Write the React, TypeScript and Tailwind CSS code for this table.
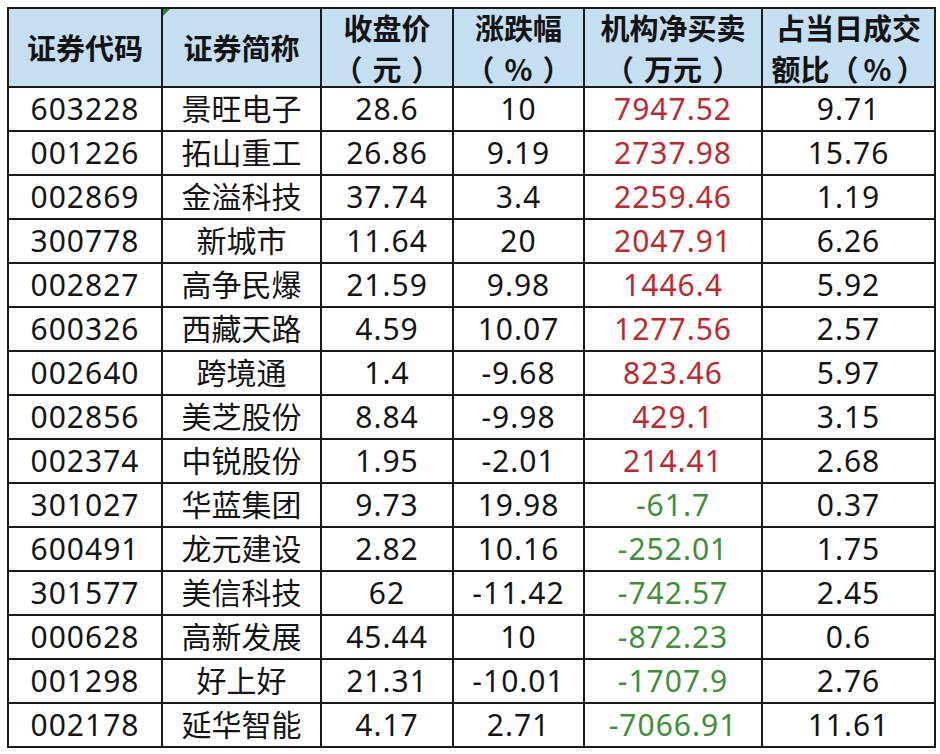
import React from 'react';

interface StockRow {
  code: string;
  name: string;
  close: string;
  change: string;
  net: string;
  ratio: string;
}

const rows: StockRow[] = [
  { code: '603228', name: '景旺电子', close: '28.6', change: '10', net: '7947.52', ratio: '9.71' },
  { code: '001226', name: '拓山重工', close: '26.86', change: '9.19', net: '2737.98', ratio: '15.76' },
  { code: '002869', name: '金溢科技', close: '37.74', change: '3.4', net: '2259.46', ratio: '1.19' },
  { code: '300778', name: '新城市', close: '11.64', change: '20', net: '2047.91', ratio: '6.26' },
  { code: '002827', name: '高争民爆', close: '21.59', change: '9.98', net: '1446.4', ratio: '5.92' },
  { code: '600326', name: '西藏天路', close: '4.59', change: '10.07', net: '1277.56', ratio: '2.57' },
  { code: '002640', name: '跨境通', close: '1.4', change: '-9.68', net: '823.46', ratio: '5.97' },
  { code: '002856', name: '美芝股份', close: '8.84', change: '-9.98', net: '429.1', ratio: '3.15' },
  { code: '002374', name: '中锐股份', close: '1.95', change: '-2.01', net: '214.41', ratio: '2.68' },
  { code: '301027', name: '华蓝集团', close: '9.73', change: '19.98', net: '-61.7', ratio: '0.37' },
  { code: '600491', name: '龙元建设', close: '2.82', change: '10.16', net: '-252.01', ratio: '1.75' },
  { code: '301577', name: '美信科技', close: '62', change: '-11.42', net: '-742.57', ratio: '2.45' },
  { code: '000628', name: '高新发展', close: '45.44', change: '10', net: '-872.23', ratio: '0.6' },
  { code: '001298', name: '好上好', close: '21.31', change: '-10.01', net: '-1707.9', ratio: '2.76' },
  { code: '002178', name: '延华智能', close: '4.17', change: '2.71', net: '-7066.91', ratio: '11.61' },
];

// title, optional second line: prefix + （unit）
const headers: { title: string; prefix?: string; unit?: string }[] = [
  { title: '证券代码' },
  { title: '证券简称' },
  { title: '收盘价', unit: '元' },
  { title: '涨跌幅', unit: '%' },
  { title: '机构净买卖', unit: '万元' },
  { title: '占当日成交', prefix: '额比', unit: '%' },
];

const cell = 'bg-white flex items-center justify-center h-[42px] text-[30px] leading-none text-[#151515]';
const num = `${cell} tracking-[1px]`;

export default function App() {
  return (
    <div
      className="w-[940px] h-[754px] bg-white pt-[7px] pl-[7px]"
      style={{ fontFamily: '"Noto Sans", "Noto Sans CJK SC", sans-serif' }}
    >
      <div className="inline-grid grid-cols-[152px_157px_130px_129px_176px_171px] gap-[2px] p-[2px] bg-[#1a1a1a]">
        {headers.map((h, i) => (
          <div
            key={i}
            className="relative bg-[#c6dff0] h-[77px] flex flex-col items-center justify-center text-[29px] font-bold leading-[41px] text-[#141414]"
            style={{ fontFamily: '"Noto Sans CJK SC", sans-serif' }}
          >
            {i === 1 && (
              <span className="absolute left-0 top-0 w-0 h-0 border-t-[7px] border-r-[7px] border-t-[#1f8a3a] border-r-transparent" />
            )}
            <span className="whitespace-nowrap">{h.title}</span>
            {h.unit && (
              <span className="whitespace-nowrap flex items-center">
                {h.prefix && <span>{h.prefix}</span>}
                <span>（</span>
                <span className={h.prefix ? 'mx-[5px]' : 'mx-[10px]'}>{h.unit}</span>
                <span>）</span>
              </span>
            )}
          </div>
        ))}
        {rows.map((r) => (
          <React.Fragment key={r.code}>
            <div className={num}>{r.code}</div>
            <div className={cell}>{r.name}</div>
            <div className={num}>{r.close}</div>
            <div className={num}>{r.change}</div>
            <div className={`${num} ${r.net.startsWith('-') ? '!text-[#3f8f3a]' : '!text-[#c4262e]'}`}>{r.net}</div>
            <div className={num}>{r.ratio}</div>
          </React.Fragment>
        ))}
      </div>
    </div>
  );
}
